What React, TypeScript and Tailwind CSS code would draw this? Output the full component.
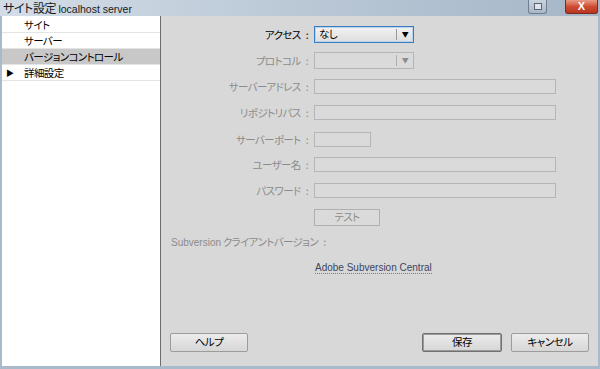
import React from "react";

const JP = "font-['Meiryo_UI','Noto_Sans_CJK_JP',sans-serif] [font-feature-settings:'palt']";

const NAV = [
  { label: "サイト", selected: false, arrow: false },
  { label: "サーバー", selected: false, arrow: false },
  { label: "バージョンコントロール", selected: true, arrow: false },
  { label: "詳細設定", selected: false, arrow: true },
];

function Row({ label, top, enabled, children }: { label: string; top: string; enabled?: boolean; children: React.ReactNode }) {
  return (
    <div className={`flex items-center ${top}`}>
      <div className={`w-[153px] text-right pr-[6px] leading-[14px] ${enabled ? "text-black" : "text-[#8c8c8c]"}`}>
        {label}
        <span className="ml-[5px]">:</span>
      </div>
      {children}
    </div>
  );
}

function Btn({ label, primary, w }: { label: string; primary?: boolean; w: string }) {
  return (
    <button
      className={`${w} h-[19px] rounded-[2px] border bg-gradient-to-b from-[#ececec] to-[#d6d6d6] text-[10.5px] tracking-[-0.5px] text-black leading-none ${
        primary ? "border-[#707070] shadow-[inset_0_0_0_1px_#9a9a9a]" : "border-[#9c9c9c]"
      }`}
    >
      {label}
    </button>
  );
}

export default function App() {
  return (
    <div className={`w-[600px] h-[369px] bg-[#a9bacb] flex flex-col ${JP} text-[10.5px] tracking-[-0.6px]`}>
      {/* Title bar */}
      <div className="h-[16px] flex items-center bg-gradient-to-r from-[#d3dde7] via-[#bac8d6] to-[#a5b6c8] relative">
        <span className="pl-[3px] text-[12px] tracking-[-0.4px] leading-[16px] text-[#1a1a1a]">
          サイト設定 <span className="font-['Liberation_Sans',sans-serif] text-[10.5px] tracking-normal">localhost server</span>
        </span>
        <div className="absolute left-[528px] top-0 w-[19px] h-[14px] rounded-b-[3px] border border-t-0 border-[#6f7f90] bg-gradient-to-b from-[#c9d4df] to-[#a9b7c6] flex items-center justify-center">
          <div className="w-[8px] h-[7px] border border-[#5b6672] bg-[#dfe5eb]" />
        </div>
        <div className="absolute left-[565px] top-0 w-[33px] h-[14px] rounded-b-[3px] border border-t-0 border-[#7b2a1e] bg-gradient-to-b from-[#e89a86] via-[#cf4c33] to-[#b8351f] flex items-center justify-center text-white text-[11px] font-bold font-['Liberation_Sans',sans-serif] leading-none tracking-normal">
          X
        </div>
      </div>

      <div className="flex-1 flex px-[2px] pb-[3px]">
        {/* Left nav */}
        <div className="w-[159px] bg-white border-r border-[#6d6d6d] pt-[1px]">
          {NAV.map((n) => (
            <div
              key={n.label}
              className={`h-[16px] flex items-center border-b border-[#e4e4e4] ${n.selected ? "bg-[#c8c8c8]" : ""}`}
            >
              <span className="w-[22px] pl-[4px] text-[8px] text-black">{n.arrow ? "▶" : ""}</span>
              <span className="text-black">{n.label}</span>
            </div>
          ))}
        </div>

        {/* Form */}
        <div className="flex-1 bg-[#d8d8d8] flex flex-col">
          <Row label="アクセス" top="mt-[10px]" enabled>
            <div className="w-[100px] h-[17px] border border-[#3a7cc0] bg-gradient-to-b from-[#f2f2f2] to-[#dedede] flex items-center shadow-[inset_0_0_0_1px_#b9d3ee]">
              <span className="flex-1 pl-[4px] text-black leading-none">なし</span>
              <span className="h-[11px] border-l border-[#9a9a9a]" />
              <span className="w-[16px] text-center text-[7px] text-black leading-none">▼</span>
            </div>
          </Row>
          <Row label="プロトコル" top="mt-[9px]">
            <div className="w-[100px] h-[17px] border border-[#b5b5b5] bg-[#dadada] flex items-center">
              <span className="flex-1" />
              <span className="h-[11px] border-l border-[#b0b0b0]" />
              <span className="w-[16px] text-center text-[7px] text-[#8c8c8c] leading-none">▼</span>
            </div>
          </Row>
          <Row label="サーバーアドレス" top="mt-[10px]">
            <div className="w-[242px] h-[15px] border border-[#b5b5b5] bg-[#dadada]" />
          </Row>
          <Row label="リポジトリパス" top="mt-[11px]">
            <div className="w-[242px] h-[15px] border border-[#b5b5b5] bg-[#dadada]" />
          </Row>
          <Row label="サーバーポート" top="mt-[12px]">
            <div className="w-[57px] h-[15px] border border-[#b5b5b5] bg-[#dadada]" />
          </Row>
          <Row label="ユーザー名" top="mt-[10px]">
            <div className="w-[242px] h-[15px] border border-[#b5b5b5] bg-[#dadada]" />
          </Row>
          <Row label="パスワード" top="mt-[11px]">
            <div className="w-[242px] h-[15px] border border-[#b5b5b5] bg-[#dadada]" />
          </Row>
          <div className="mt-[11px] pl-[153px]">
            <div className="w-[66px] h-[17px] border border-[#b0b0b0] bg-[#dadada] flex items-center justify-center text-[#8c8c8c] leading-none">
              テスト
            </div>
          </div>
          <div className="mt-[9px] pl-[10px] text-[#8c8c8c] leading-[14px]">
            <span className="font-['Liberation_Sans',sans-serif] text-[10px] tracking-normal">Subversion</span> クライアントバージョン
            <span className="ml-[5px]">:</span>
          </div>
          <div className="mt-[10px] pl-[154px] leading-[14px]">
            <span className="font-['Liberation_Sans',sans-serif] text-[10px] tracking-normal text-[#3d4660] border-b border-dotted border-[#6a7aa0]">
              Adobe Subversion Central
            </span>
          </div>
          <div className="flex-1" />
          <div className="flex items-center pb-[14px] pl-[9px] pr-[9px]">
            <Btn label="ヘルプ" w="w-[78px]" />
            <div className="flex-1" />
            <Btn label="保存" w="w-[80px]" primary />
            <div className="w-[9px]" />
            <Btn label="キャンセル" w="w-[78px]" />
          </div>
        </div>
      </div>
    </div>
  );
}
